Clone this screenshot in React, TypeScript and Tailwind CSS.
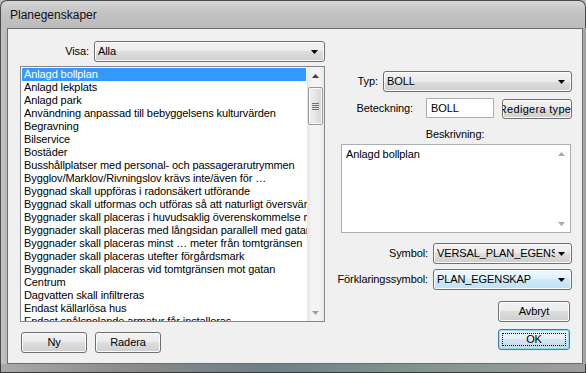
import type { ReactNode } from 'react'

const items = [
  'Anlagd bollplan',
  'Anlagd lekplats',
  'Anlagd park',
  'Användning anpassad till bebyggelsens kulturvärden',
  'Begravning',
  'Bilservice',
  'Bostäder',
  'Busshållplatser med personal- och passagerarutrymmen',
  'Bygglov/Marklov/Rivningslov krävs inte/även för …',
  'Byggnad skall uppföras i radonsäkert utförande',
  'Byggnad skall utformas och utföras så att naturligt översvämningsvatten kan avledas',
  'Byggnader skall placeras i huvudsaklig överenskommelse med befintlig bebyggelse',
  'Byggnader skall placeras med långsidan parallell med gatan',
  'Byggnader skall placeras minst … meter från tomtgränsen',
  'Byggnader skall placeras utefter förgårdsmark',
  'Byggnader skall placeras vid tomtgränsen mot gatan',
  'Centrum',
  'Dagvatten skall infiltreras',
  'Endast källarlösa hus',
  'Endast snålspolande armatur får installeras',
]

const face =
  'border-[#707070] bg-[linear-gradient(to_bottom,#f2f2f2_0%,#ebebeb_50%,#dddddd_50%,#cfcfcf_100%)] shadow-[inset_0_0_0_1px_#fbfbfb]'
const hotFace =
  'border-[#3c7fb1] bg-[linear-gradient(to_bottom,#eef8fd_0%,#e0f2fc_50%,#cde9f8_50%,#bde2f5_100%)] shadow-[inset_0_0_0_1px_#f6fbfe]'

function Caret() {
  return (
    <svg width="7" height="4" viewBox="0 0 7 4" className="shrink-0">
      <path d="M0 0h7L3.5 4z" fill="#000" />
    </svg>
  )
}

function Combo({ value, hot, className = '' }: { value: string; hot?: boolean; className?: string }) {
  return (
    <div
      className={`flex h-[21px] items-center rounded-[3px] border pl-[3px] pr-[6px] ${hot ? hotFace : face} ${className}`}
    >
      <span className="mr-[3px] flex-1 overflow-hidden whitespace-nowrap leading-[13px]">{value}</span>
      <Caret />
    </div>
  )
}

function Button({ children, className = '', def }: { children: ReactNode; className?: string; def?: boolean }) {
  return (
    <div
      className={`relative flex items-center justify-center overflow-hidden whitespace-nowrap rounded-[3px] border ${
        def
          ? 'border-[#3c7fb1] bg-[linear-gradient(to_bottom,#eef6fa_0%,#e4eff5_50%,#d3e5ee_50%,#c6dce8_100%)] shadow-[inset_0_0_0_1px_#8fdcf8]'
          : face
      } ${className}`}
    >
      {children}
      {def && <div className="absolute inset-[3px] border border-dotted border-[#000]" />}
    </div>
  )
}

function ScrollArrow({ up, color = '#404040' }: { up?: boolean; color?: string }) {
  return (
    <svg width="7" height="4" viewBox="0 0 7 4">
      <path d={up ? 'M0 4h7L3.5 0z' : 'M0 0h7L3.5 4z'} fill={color} />
    </svg>
  )
}

export default function App() {
  return (
    <div className="flex h-[373px] w-[586px] flex-col overflow-hidden bg-[#bdbdbd] font-['Liberation_Sans',Arial,sans-serif] text-[11px] tracking-[-0.1px] text-black">
      {/* title bar */}
      <div className="flex h-[28px] shrink-0 items-center rounded-t-[7px] border-x border-t border-[#4a4a4a] bg-[linear-gradient(to_bottom,#d6d6d6,#c4c4c4_40%,#bcbcbc)] pl-[9px]">
        <span className="text-[12px] tracking-normal text-[#111]">Planegenskaper</span>
      </div>

      <div className="flex min-h-0 flex-1">
        <div className="w-[7px] shrink-0 border-l border-[#4a4a4a] bg-[linear-gradient(to_right,#c4c4c4,#b8b8b8)]" />

        {/* client area */}
        <div className="flex w-[576px] shrink-0 border border-[#6c6c6c] bg-[#f0f0f0]">
          {/* left column */}
          <div className="ml-[12px] mt-[12px] flex w-[305px] flex-col">
            <div className="flex h-[21px] items-center justify-end gap-[5px]">
              <span>Visa:</span>
              <Combo value="Alla" className="w-[231px]" />
            </div>

            <div className="mt-[4px] flex h-[256px] border border-[#828790] bg-white">
              <div className="min-w-0 flex-1 overflow-hidden p-[1px]">
                {items.map((it, i) => (
                  <div
                    key={it}
                    className={`h-[13px] whitespace-nowrap pl-[2px] leading-[13px] ${
                      i === 0 ? 'bg-[#3399ff] text-white' : ''
                    }`}
                  >
                    {it}
                  </div>
                ))}
              </div>
              <div className="flex w-[17px] shrink-0 flex-col bg-[linear-gradient(to_right,#e6e6e6,#f4f4f4_30%,#f4f4f4_70%,#e9e9e9)]">
                <div className="flex h-[17px] items-center justify-center">
                  <ScrollArrow up />
                </div>
                <div className="mx-[1px] mt-[3px] flex h-[38px] flex-col items-center justify-center gap-[1px] rounded-[2px] border border-[#979797] bg-[linear-gradient(to_right,#f2f2f2,#e4e4e4_50%,#d4d4d4)] shadow-[inset_0_0_0_1px_#fbfbfb]">
                  <div className="h-[1px] w-[7px] bg-[#6e6e6e]" />
                  <div className="h-[1px] w-[7px] bg-[#6e6e6e]" />
                  <div className="h-[1px] w-[7px] bg-[#6e6e6e]" />
                  <div className="h-[1px] w-[7px] bg-[#6e6e6e]" />
                </div>
                <div className="flex-1" />
                <div className="flex h-[17px] items-center justify-center">
                  <ScrollArrow color="#a0a0a0" />
                </div>
              </div>
            </div>

            <div className="mt-[10px] flex gap-[8px] pl-[1px]">
              <Button className="h-[21px] w-[66px]">Ny</Button>
              <Button className="h-[21px] w-[66px]">Radera</Button>
            </div>
          </div>

          {/* right column */}
          <div className="ml-[5px] mt-[42px] flex w-[242px] flex-col">
            <div className="flex h-[21px] items-center justify-end gap-[5px]">
              <span>Typ:</span>
              <Combo value="BOLL" className="w-[189px]" />
            </div>

            <div className="mt-[5px] flex h-[22px] items-center justify-end">
              <span className="mr-[13px]">Beteckning:</span>
              <div className="flex h-[20px] w-[68px] items-center border border-[#abadb3] bg-white pl-[4px]">BOLL</div>
              <Button className="ml-[8px] mt-[2px] h-[20px] w-[70px] tracking-[0.3px]">Redigera typer</Button>
            </div>

            <div className="mt-[9px] h-[13px] pl-[8px] text-center leading-[13px]">Beskrivning:</div>

            <div className="ml-[11px] mt-[3px] flex h-[89px] w-[230px] border border-[#abadb3] bg-white">
              <div className="flex-1 pl-[4px] pt-[3px] leading-[13px]">Anlagd bollplan</div>
              <div className="flex w-[17px] flex-col justify-between">
                <div className="flex h-[17px] items-center justify-center pt-[1px]">
                  <ScrollArrow up color="#a8a8a8" />
                </div>
                <div className="flex h-[17px] items-center justify-center">
                  <ScrollArrow color="#a8a8a8" />
                </div>
              </div>
            </div>

            <div className="mt-[10px] flex h-[21px] items-center justify-end gap-[5px]">
              <span>Symbol:</span>
              <Combo value="VERSAL_PLAN_EGENSKAP" className="w-[139px]" />
            </div>

            <div className="mt-[5px] flex h-[21px] items-center justify-end gap-[5px]">
              <span>Förklaringssymbol:</span>
              <Combo value="PLAN_EGENSKAP" hot className="w-[139px]" />
            </div>

            <div className="mt-[11px] flex flex-col items-end gap-[7px] pr-[2px]">
              <Button className="h-[21px] w-[72px]">Avbryt</Button>
              <Button def className="h-[21px] w-[72px]">
                OK
              </Button>
            </div>
          </div>
        </div>

        <div className="flex-1 bg-[linear-gradient(to_right,#b0b0b0,#9a9a9a)]" />
      </div>

      {/* bottom frame */}
      <div className="h-[9px] shrink-0 border-x border-b border-[#3a3a3a] bg-[linear-gradient(to_right,#a9a9a9,#8c8c8c_20%,#6f7f86_45%,#7f9390_70%,#9e9e9e)]" />
    </div>
  )
}
